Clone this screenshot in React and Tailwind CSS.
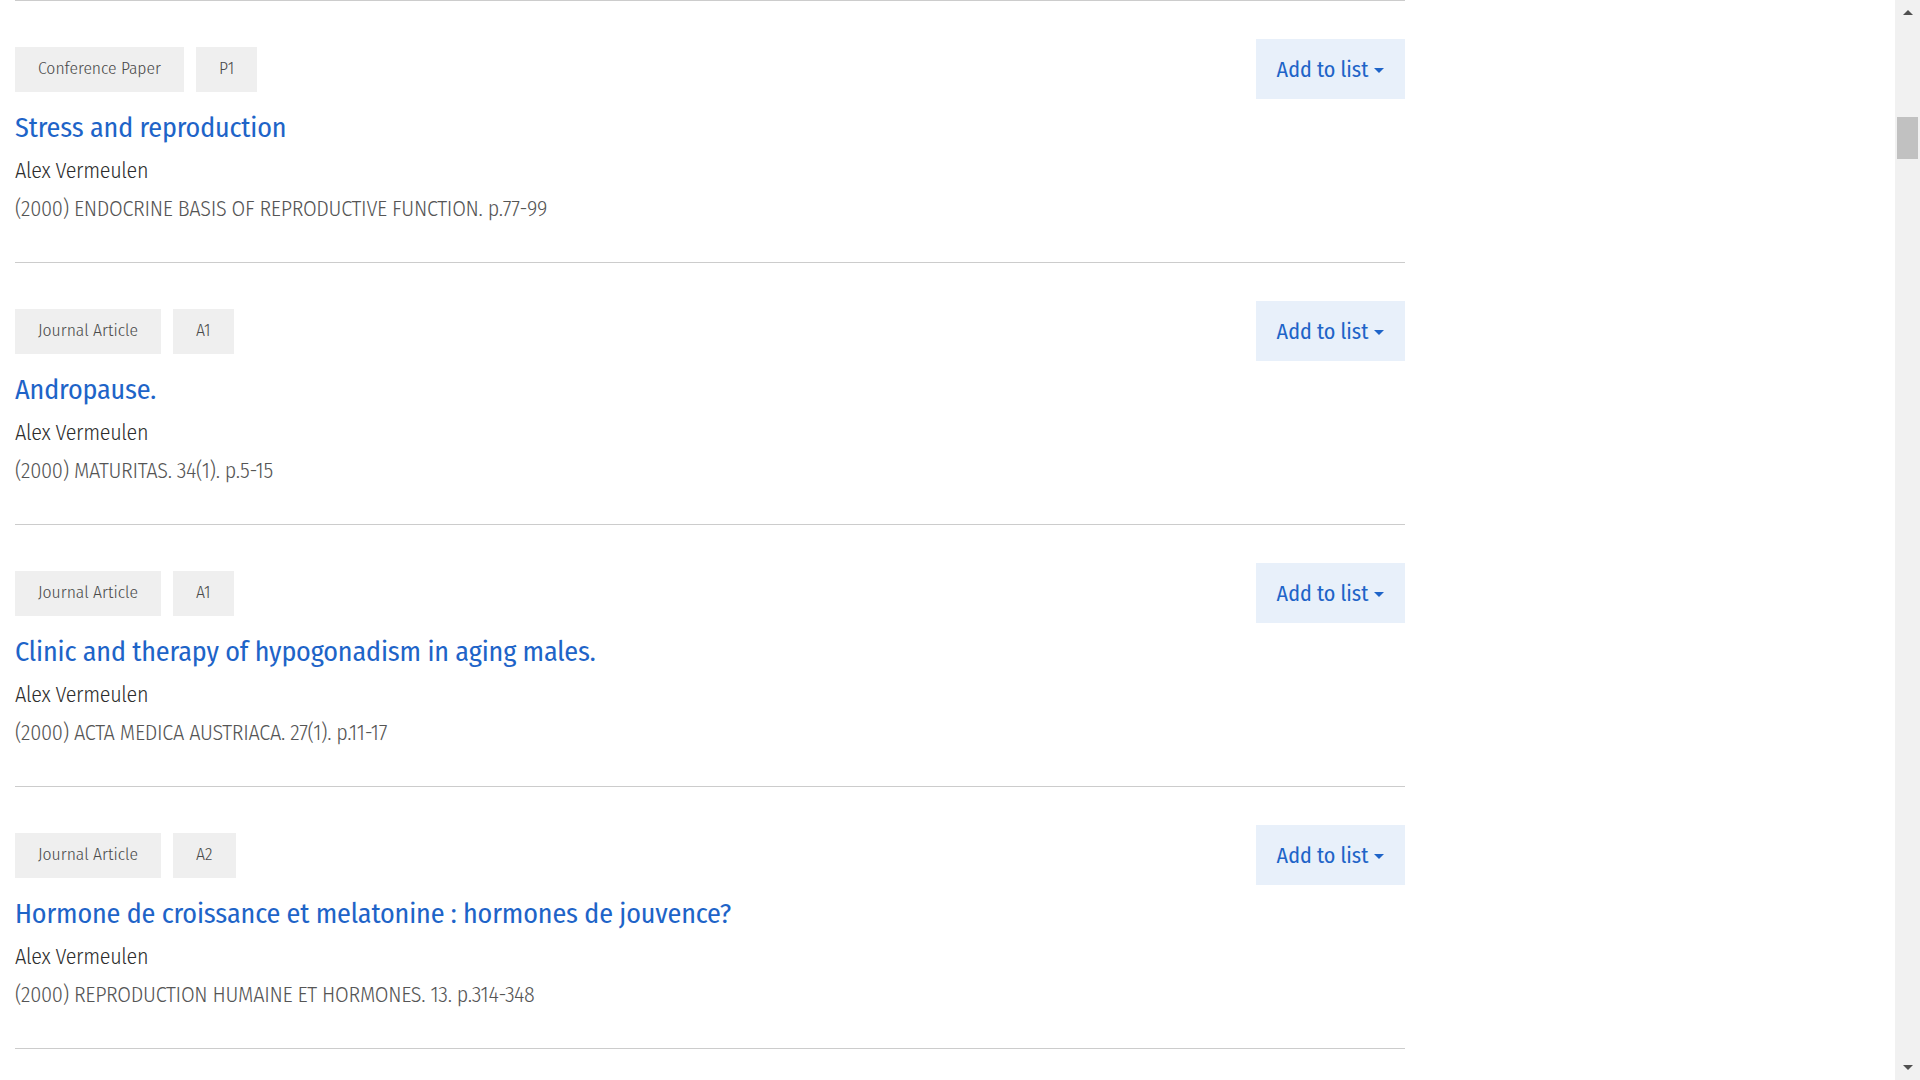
import React from 'react';

const publications = [
  { type: 'Conference Paper', cls: 'P1', title: 'Stress and reproduction', source: '(2000) ENDOCRINE BASIS OF REPRODUCTIVE FUNCTION. p.77-99' },
  { type: 'Journal Article', cls: 'A1', title: 'Andropause.', source: '(2000) MATURITAS. 34(1). p.5-15' },
  { type: 'Journal Article', cls: 'A1', title: 'Clinic and therapy of hypogonadism in aging males.', source: '(2000) ACTA MEDICA AUSTRIACA. 27(1). p.11-17' },
  { type: 'Journal Article', cls: 'A2', title: 'Hormone de croissance et melatonine : hormones de jouvence?', source: '(2000) REPRODUCTION HUMAINE ET HORMONES. 13. p.314-348' },
];

const Publication = ({ pub }) => (
  <div className="border-t border-[#cccccc] pt-[38px] pb-[38px]">
    <div className="flex items-center justify-between h-[60px]">
      <div className="flex items-center gap-3">
        <span className="bg-[#efefef] text-[#4a4a4a] text-[17.5px] font-light h-[45px] px-[23px] flex items-center">
          {pub.type}
        </span>
        <span className="bg-[#efefef] text-[#4a4a4a] text-[17.5px] font-light h-[45px] px-[23px] flex items-center">
          {pub.cls}
        </span>
      </div>
      <button
        type="button"
        className="bg-[#e8f0fa] text-[#1e64c8] text-[22px] h-[60px] w-[149px] flex items-center justify-center gap-[6px]"
      >
        Add to list
        <span className="w-0 h-0 border-l-[5px] border-r-[5px] border-t-[5px] border-l-transparent border-r-transparent border-t-[#1e64c8] mt-[2px]" />
      </button>
    </div>
    <h3 className="mt-[11px] text-[28px] leading-[36px] tracking-[-0.15px] text-[#1e64c8]">
      <a href="#">{pub.title}</a>
    </h3>
    <div className="mt-[10px] text-[22px] leading-[30px] tracking-[-0.3px] font-light text-[#2d2d2d]">Alex Vermeulen</div>
    <div className="mt-[8px] text-[22px] leading-[30px] tracking-[-0.3px] font-light text-[#555555]">{pub.source}</div>
  </div>
);

const Scrollbar = () => (
  <div className="w-[25px] h-screen bg-[#f1f1f1] flex flex-col items-center shrink-0">
    <div className="h-[25px] w-full flex items-center justify-center">
      <span className="w-0 h-0 border-l-[5px] border-r-[5px] border-b-[5px] border-l-transparent border-r-transparent border-b-[#505050]" />
    </div>
    <div className="mt-[92px] w-[21px] h-[42px] bg-[#c1c1c1]" />
    <div className="flex-1" />
    <div className="h-[25px] w-full flex items-center justify-center">
      <span className="w-0 h-0 border-l-[5px] border-r-[5px] border-t-[5px] border-l-transparent border-r-transparent border-t-[#505050]" />
    </div>
  </div>
);

export default function App() {
  return (
    <div className="bg-white h-screen overflow-hidden flex font-['Fira_Sans_Condensed','Roboto_Condensed',sans-serif]">
      <main className="flex-1 min-w-0">
        <div className="ml-[15px] w-[1390px]">
          {publications.map((p, i) => <Publication key={i} pub={p} />)}
          <div className="border-t border-[#cccccc]" />
        </div>
      </main>
      <Scrollbar />
    </div>
  );
}
